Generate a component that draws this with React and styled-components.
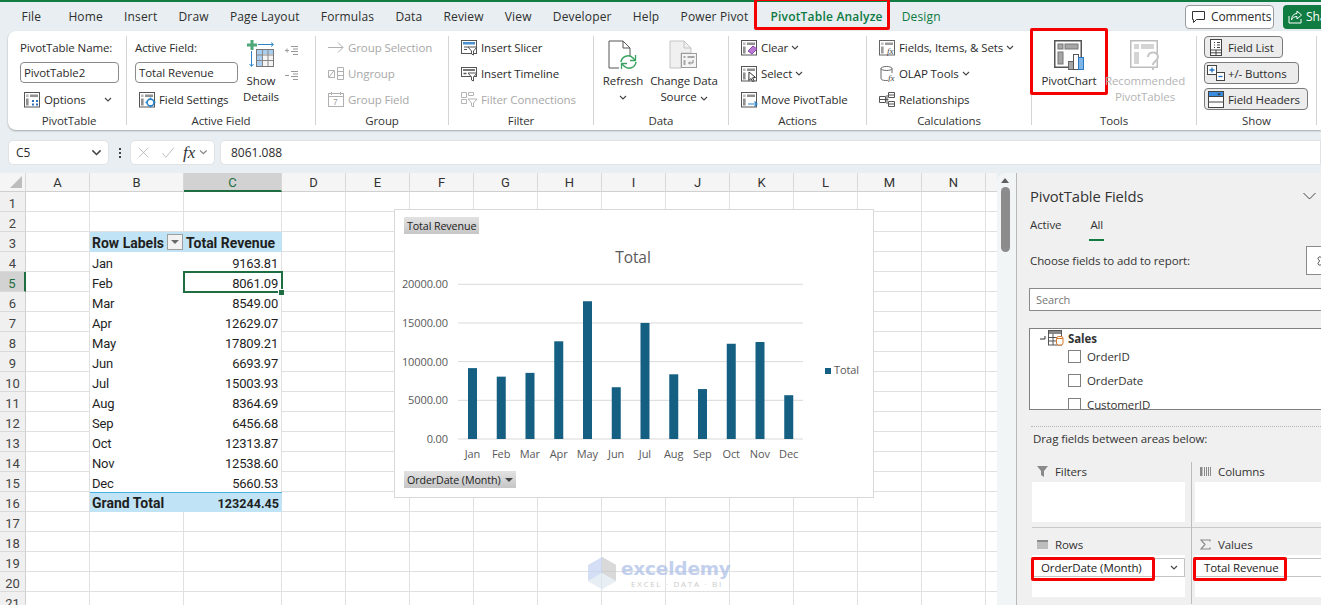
import React from 'react';
import styled, { createGlobalStyle } from 'styled-components';
import { Settings } from 'lucide-react';

const GlobalStyle = createGlobalStyle`
  html, body {
    margin: 0;
    height: 100%;
    overflow: hidden;
    background: #e8eef1;
  }
  *, *::before, *::after { box-sizing: border-box; }
`;

const UI_FONT = `"Open Sans", "Noto Sans", sans-serif`;
const CELL_FONT = `Roboto, "Liberation Sans", sans-serif`;
const RED = '#f50000';
const GREEN = '#107c41';

const Page = styled.div`
  display: flex;
  flex-direction: column;
  height: 605px;
  width: 1321px;
  overflow: hidden;
  font-family: ${UI_FONT};
  font-size: 11.5px;
  letter-spacing: -0.1px;
  color: #2b2b2b;
`;

/* tabs */
const TabBar = styled.div`
  display: flex;
  align-items: center;
  height: 31px;
  flex: none;
  padding-left: 11px;
  border-top: 2px solid ${GREEN};
`;

const Tab = styled.div`
  position: relative;
  padding: 0 10.6px;
  font-size: 12px;
  letter-spacing: 0.15px;
  white-space: nowrap;
  color: ${p => (p.$green ? '#0e7a43' : '#2f2f2f')};
  ${p => p.$first && 'margin-right: 6px;'}
  ${p => p.$active && `
    margin: 0 1.4px 0 -4.6px;
    padding: 0 7px 0 16px;
    font-weight: 600;
    letter-spacing: 0.2px;
    &::before {
      content: '';
      position: absolute;
      left: 8px; right: 7px; bottom: -4px;
      height: 2px;
      background: ${GREEN};
    }
    &::after {
      content: '';
      position: absolute;
      left: 0; right: 0; top: -10px; bottom: -5px;
      border: 3px solid ${RED};
      border-radius: 2px;
    }
  `}
`;

const TabActions = styled.div`
  display: flex;
  align-items: center;
  gap: 9px;
  margin-left: auto;
  margin-right: -22px;
`;

const CommentsButton = styled.div`
  display: flex;
  align-items: center;
  gap: 5px;
  width: 89px;
  height: 24px;
  padding-left: 5px;
  background: #fff;
  border: 1px solid #9a9a9a;
  border-radius: 4px;
  font-size: 12px;
`;

const ShareButton = styled.div`
  display: flex;
  align-items: center;
  gap: 3px;
  width: 60px;
  height: 24px;
  padding-left: 5px;
  background: ${GREEN};
  border-radius: 4px;
  color: #fff;
  font-size: 12px;
`;

/* ribbon */
const Ribbon = styled.div`
  display: flex;
  flex: none;
  height: 99px;
  margin-left: 8px;
  padding: 5px 0;
  background: #fff;
  border-radius: 8px 0 0 8px;
  box-shadow: 0 1px 2px rgba(0, 0, 0, 0.3);
`;

const Group = styled.section`
  display: flex;
  flex-direction: column;
  flex: none;
  width: ${p => p.$w}px;
  border-right: 1px solid #d4d4d4;
`;

const GroupBody = styled.div`
  display: flex;
  flex: 1;
  gap: ${p => p.$gap || 0}px;
  margin-top: -2px;
  padding-left: ${p => (p.$pad === undefined ? 12 : p.$pad)}px;
`;

const GroupLabel = styled.div`
  height: 14px;
  margin-bottom: -3px;
  padding-left: ${p => p.$indent || 0}px;
  line-height: 14px;
  text-align: center;
  color: #333;
`;

const Stack = styled.div`
  display: flex;
  flex-direction: column;
  width: ${p => (p.$w ? `${p.$w}px` : 'auto')};
`;

const SmallRow = styled.div`
  display: flex;
  align-items: center;
  gap: 3px;
  height: 26px;
  padding-left: ${p => (p.$inset ? 4 : 0)}px;
  white-space: nowrap;
  color: ${p => (p.$dim ? '#a8a8a8' : 'inherit')};
`;

const PlainLine = styled.div`
  display: flex;
  align-items: center;
  height: 26px;
  white-space: nowrap;
`;

const NameInput = styled.div`
  display: flex;
  align-items: center;
  height: 21px;
  margin: 2px 0 3px;
  padding-left: 3px;
  background: #fff;
  border: 1px solid #8a8a8a;
  border-radius: 4px;
`;

const TallButton = styled.div`
  display: flex;
  flex-direction: column;
  align-items: center;
  width: ${p => p.$w}px;
  padding-top: 6px;
  text-align: center;
  line-height: 16px;
  white-space: nowrap;
  color: ${p => (p.$dim ? '#b4b4b4' : 'inherit')};
  position: relative;
  ${p => p.$marked && `
    &::after {
      content: '';
      position: absolute;
      left: -2px; right: -2px; top: -6px; height: 67px;
      border: 3px solid ${RED};
      border-radius: 2px;
    }
  `}
`;

const TallIcon = styled.div`
  height: 30px;
  margin-bottom: 3px;
`;

const SideIcons = styled.div`
  display: flex;
  flex-direction: column;
  gap: 14px;
  padding-top: 11px;
`;

const ToggleStack = styled.div`
  display: flex;
  flex-direction: column;
  align-items: flex-start;
  gap: 4px;
  padding-top: 2px;
`;

const ToggleButton = styled.div`
  display: flex;
  align-items: center;
  width: ${p => p.$w}px;
  height: 22px;
  background: #ececec;
  border: 1px solid #7b7b7b;
  border-radius: 4px;
  white-space: nowrap;
`;

const ToggleIcon = styled.span`
  display: flex;
  justify-content: center;
  flex: none;
  width: 22px;
  margin-right: 1px;
`;

const Caret = ({ color = '#444', size = 8, style }) => (
  <svg width={size} height={size * 0.625} viewBox="0 0 8 5" fill="none" style={style}>
    <path d="M1 1l3 3 3-3" stroke={color} strokeWidth="1.1" />
  </svg>
);

/* ribbon icons */
const SmallIcon = ({ children, w = 17 }) => (
  <svg width={w} height="17" viewBox={`0 0 ${w} 17`} fill="none" style={{ flex: 'none' }}>
    {children}
  </svg>
);

const PivotBase = ({ c = '#555', children }) => (
  <SmallIcon>
    <rect x=".5" y="1.5" width="15" height="14.5" stroke={c} fill="#fff" />
    <rect x="6" y="3.5" width="8" height="2.5" fill={c} opacity=".65" />
    <rect x="2" y="3.5" width="2.6" height="2.5" fill={c} opacity=".4" />
    <rect x="2" y="7.5" width="2.6" height="7" fill={c} opacity=".65" />
    {children}
  </SmallIcon>
);

const OptionsIcon = () => (
  <PivotBase>
    <path d="M8 9h2v2H8zM12 9h2v2h-2zM8 12.5h2v2H8zM12 12.5h2v2h-2z" fill="#2f6fb5" />
  </PivotBase>
);
const SettingsIcon = () => (
  <PivotBase>
    <circle cx="11.5" cy="11.5" r="3.4" fill="#fff" stroke="#2e86c9" strokeWidth="1.6" />
    <path d="M11.5 6.5v2M11.5 14.5v2M6.5 11.5h2M14.5 11.5h2" stroke="#2e86c9" strokeWidth="1.4" />
  </PivotBase>
);
const ClearIcon = () => (
  <PivotBase>
    <path d="M7 12l5-5 4 3-5 5z" fill="#b77ad0" stroke="#8e44ad" />
  </PivotBase>
);
const SelectIcon = () => (
  <PivotBase>
    <path d="M8 7l6.5 5.5-3 .3 1.6 3-1.5.7-1.5-3-2.3 2z" fill="#fff" stroke="#333" />
  </PivotBase>
);
const MoveIcon = () => (
  <PivotBase>
    <path d="M7 13h9M13.5 10.5L16 13l-2.5 2.5" stroke="#2e86c9" strokeWidth="1.2" />
  </PivotBase>
);
const FieldsIcon = () => (
  <PivotBase c="#666">
    <text x="8" y="15" fontFamily="Liberation Serif, serif" fontStyle="italic" fontSize="9" fill="#444">fx</text>
  </PivotBase>
);
const OlapIcon = () => (
  <SmallIcon>
    <path d="M2 3.5v10c0 1 1.8 2 4.5 2s2.5-.4 2.5-.4M13 3.5V8" stroke="#666" />
    <ellipse cx="7.5" cy="3.5" rx="5.5" ry="2" stroke="#666" />
    <text x="9" y="16" fontFamily="Liberation Serif, serif" fontStyle="italic" fontSize="9" fill="#444">fx</text>
  </SmallIcon>
);
const RelationIcon = () => (
  <SmallIcon>
    <path d="M.5 5.5h6v6h-6zM9.5 1.5h6v5h-6zM9.5 10.5h6v5h-6zM.5 8.5h6M9.5 4h6M9.5 13h6M6.5 8.5h3M8 4v9" stroke="#555" />
  </SmallIcon>
);
const SlicerIcon = ({ c = '#555' }) => (
  <SmallIcon>
    <rect x=".5" y="1.5" width="15" height="13" stroke={c} />
    <rect x="2" y="3" width="12" height="2.5" fill="#4a90d0" />
    <path d="M3 8h4M3 10.5h3" stroke={c} />
    <path d="M7 8h9l-3.5 4v4l-2-1v-3z" fill="#fff" stroke={c} />
  </SmallIcon>
);
const TimelineIcon = () => (
  <SmallIcon>
    <rect x=".5" y="2.5" width="15" height="9" stroke="#555" />
    <rect x="2" y="4" width="12" height="2" fill="#777" />
    <path d="M2.5 8.5h3" stroke="#555" strokeWidth="1.5" />
    <path d="M7 8h9l-3.5 4v4l-2-1v-3z" fill="#fff" stroke="#555" />
  </SmallIcon>
);
const ConnectionsIcon = () => (
  <SmallIcon>
    <path d="M.5 1.5h5v5h-5zM.5 8.5h5v4h-5zM7.5 1.5h5v3h-5z" stroke="#b5b5b5" />
    <path d="M7 8h9l-3.5 4v4l-2-1v-3z" fill="#fff" stroke="#b5b5b5" />
  </SmallIcon>
);
const ArrowIcon = () => (
  <SmallIcon>
    <path d="M0 8.5h15M10 3.5l5 5-5 5" stroke="#b0b0b0" />
  </SmallIcon>
);
const UngroupIcon = () => (
  <SmallIcon>
    <path d="M.5 5.5h6v7h-6zM9.5 2.5h6v12h-6zM9.5 6.5h6M9.5 10.5h6M1 12l5-6.5" stroke="#b0b0b0" />
  </SmallIcon>
);
const GroupFieldIcon = () => (
  <SmallIcon>
    <rect x=".5" y="2.5" width="15" height="13" stroke="#b0b0b0" />
    <path d="M.5 5.5h15M3.5 1v3M12.5 1v3" stroke="#b0b0b0" />
    <text x="5" y="14" fontFamily="Liberation Sans, sans-serif" fontSize="8.5" fill="#a0a0a0">7</text>
  </SmallIcon>
);
const ExpandIcon = ({ minus }) => (
  <svg width="15" height="11" viewBox="0 0 15 11" fill="none">
    <path d={minus ? 'M1 5.5h4' : 'M1 5.5h4M3 3.5v4'} stroke="#999" />
    <path d="M7 1.5h7M9 4h5M7 6.5h7M9 9.5h5" stroke="#999" />
  </svg>
);
const ShowDetailsIcon = () => (
  <svg width="28" height="28" viewBox="0 0 28 28" fill="none">
    <path d="M3.5 0h3v3.5H10v3H6.5V10h-3V6.5H0v-3h3.5z" fill="#4ea879" />
    <path d="M11 4.5h15M24 2.5l2.5 2-2.5 2M4.5 11v15M2.5 24l2 2.5 2-2.5" stroke="#2e86c9" />
    <rect x="9.5" y="9.5" width="17" height="17" fill="#f4f4f4" stroke="#777" />
    <rect x="10" y="10" width="5" height="16" fill="#a9cdee" />
    <rect x="10" y="10" width="16" height="4" fill="#a9cdee" />
    <path d="M15.5 10v16M21 10v16M10 15h16M10 20.5h16" stroke="#888" />
  </svg>
);
const RefreshIcon = () => (
  <svg width="30" height="30" viewBox="0 0 30 30" fill="none">
    <path d="M1 1h14l7 7v8M15 1v7h7M1 1v27h10" stroke="#555" />
    <path d="M13 22a7 7 0 0 1 12-4l2 2M28 22a7 7 0 0 1-12 4l-2-2" stroke="#3aa35f" strokeWidth="1.5" />
    <path d="M27.5 15v5.5H22M13.5 29v-5.5H19" stroke="#3aa35f" strokeWidth="1.3" />
  </svg>
);
const ChangeSourceIcon = () => (
  <svg width="30" height="30" viewBox="0 0 30 30" fill="none">
    <path d="M1 1h14l7 7v5H12v15H1z" fill="#f0f0f0" stroke="#c4c4c4" />
    <path d="M15 1v7h7" stroke="#c4c4c4" />
    <rect x="12.5" y="13.5" width="15" height="14" fill="#f4f4f4" stroke="#9c9c9c" />
    <path d="M14.5 16h2v2h-2zM18.5 16h7v2h-7zM14.5 20h2v5h-2z" fill="#a8a8a8" />
    <path d="M24 20v3h-4M21 21.5L19.5 23l1.5 1.5" stroke="#888" />
  </svg>
);
const PivotChartIcon = () => (
  <svg width="31" height="31" viewBox="0 0 31 31" fill="none">
    <rect x=".75" y=".75" width="26.5" height="26.5" fill="#fff" stroke="#555" strokeWidth="1.5" />
    <rect x="4" y="4" width="5" height="5" fill="#a6a6a6" stroke="#777" />
    <rect x="11" y="4" width="13" height="5" fill="#a6a6a6" stroke="#777" />
    <rect x="4" y="12" width="5" height="12" fill="#a6a6a6" stroke="#777" />
    <rect x="14.5" y="21.5" width="5" height="8" fill="#a6a6a6" stroke="#666" />
    <rect x="19.5" y="14.5" width="5" height="15" fill="#fff" stroke="#555" />
    <rect x="24.5" y="17.5" width="5" height="12" fill="#7fb5e6" stroke="#2b79c2" />
  </svg>
);
const RecommendedIcon = () => (
  <svg width="31" height="31" viewBox="0 0 31 31" fill="none">
    <rect x=".75" y=".75" width="26.5" height="26.5" fill="#fff" stroke="#bdbdbd" strokeWidth="1.5" />
    <rect x="4" y="4" width="5" height="5" fill="#d4d4d4" />
    <rect x="11" y="4" width="13" height="5" fill="#d4d4d4" />
    <rect x="4" y="12" width="5" height="12" fill="#d4d4d4" />
    <path d="M18 17c0-6 10-6 10 0 0 4-5 4-5 8M23 27v3" stroke="#c4c4c4" strokeWidth="2" fill="#fff" />
  </svg>
);
const FieldListIcon = () => (
  <svg width="12" height="17" viewBox="0 0 12 17" fill="none">
    <rect x=".5" y=".5" width="11" height="16" stroke="#444" fill="#fff" />
    <path d="M4 3.500h1M7 3.500h3M4 6h1M7 6h3M4 8.500h1M7 8.500h3M.5 11h11M.5 13.800h11M6 11v5.500" stroke="#444" />
  </svg>
);
const PlusMinusIcon = () => (
  <svg width="18" height="17" viewBox="0 0 18 17" fill="none">
    <rect x=".5" y=".5" width="9" height="9" stroke="#444" fill="#fff" />
    <path d="M2.500 5h5M5 2.500v5" stroke="#1f6fc0" strokeWidth="1.3" />
    <rect x="9.500" y="7.500" width="8" height="8" stroke="#444" fill="#fff" />
    <path d="M11.500 11.500h4" stroke="#1f6fc0" strokeWidth="1.3" />
  </svg>
);
const FieldHeadersIcon = () => (
  <svg width="16" height="17" viewBox="0 0 16 17" fill="none">
    <rect x=".5" y=".5" width="15" height="16" stroke="#444" fill="#fff" />
    <rect x="1" y="1" width="14" height="4" fill="#3a8dde" />
    <path d="M.5 5.500h15M.5 11h15" stroke="#444" />
    <path d="M9 2.500h4L11 4.500z" fill="#333" />
  </svg>
);

/* formula bar */
const FormulaBar = styled.div`
  display: flex;
  align-items: center;
  flex: none;
  height: 43px;
  padding: 10px 0 8px 8px;
`;

const FormulaBox = styled.div`
  display: flex;
  align-items: center;
  flex: ${p => (p.$w ? 'none' : 1)};
  width: ${p => (p.$w ? `${p.$w}px` : 'auto')};
  height: 25px;
  margin-left: ${p => p.$gapLeft || 0}px;
  padding: 0 6px 0 ${p => p.$pad || 7}px;
  gap: ${p => p.$gap || 0}px;
  background: #fff;
  border: 1px solid #dfe3e5;
  border-radius: ${p => (p.$w ? '5px' : '5px 0 0 5px')};
  font-size: 12px;
  letter-spacing: 0;
  justify-content: ${p => (p.$spread ? 'space-between' : 'flex-start')};
`;

const GripDots = styled.div`
  display: flex;
  flex-direction: column;
  gap: 2px;
  width: 21px;
  align-items: center;
  & > i {
    display: block;
    width: 2px;
    height: 2px;
    background: #444;
  }
`;

const FormulaIcons = () => (
  <svg width="48" height="16" viewBox="0 0 48 16" fill="none">
    <path d="M2 2l11 11M13 2L2 13" stroke="#b5b5b5" />
    <path d="M29 8l4 5 9-11" stroke="#b5b5b5" />
  </svg>
);

const FxMark = styled.span`
  font-family: 'Liberation Serif', serif;
  font-style: italic;
  font-size: 17px;
  color: #333;
`;

/* sheet */
const Workspace = styled.div`
  display: flex;
  flex: 1;
  min-height: 0;
`;

const Sheet = styled.div`
  position: relative;
  width: 997px;
  flex: none;
  overflow: hidden;
  background: #fff;
`;

const SheetGrid = styled.div`
  display: grid;
  grid-template-columns: 26px 64px 94px 98px repeat(12, 64px);
  grid-template-rows: 19px;
  grid-auto-rows: 20px;
  width: 1050px;
  font-family: ${CELL_FONT};
  font-size: 13px;
  letter-spacing: 0;
  color: #1f1f1f;
`;

const ColHead = styled.div`
  display: flex;
  align-items: center;
  justify-content: center;
  padding-top: 1px;
  background: ${p => (p.$on ? '#d2d2d2' : '#f5f5f5')};
  border-right: 1px solid #d8d8d8;
  border-bottom: ${p => (p.$on ? '2px solid #1e6e42' : '1px solid #d0d0d0')};
  color: ${p => (p.$on ? '#1e6e42' : '#333')};
`;

const Corner = styled(ColHead)`
  position: relative;
  &::after {
    content: '';
    position: absolute;
    right: 3px;
    bottom: 3px;
    width: 12px;
    height: 12px;
    border-style: solid;
    border-width: 0 0 12px 12px;
    border-color: transparent transparent #bdbdbd transparent;
  }
`;

const RowHead = styled.div`
  display: flex;
  align-items: center;
  justify-content: center;
  padding-top: 3px;
  background: ${p => (p.$on ? '#d2d2d2' : '#f0f0f0')};
  border-right: ${p => (p.$on ? '2px solid #1e6e42' : '1px solid #d0d0d0')};
  border-bottom: 1px solid #dadada;
  color: ${p => (p.$on ? '#1e6e42' : '#444')};
`;

const Cell = styled.div`
  border-right: 1px solid #e0e0e0;
  border-bottom: 1px solid #e0e0e0;
`;

const PivotCell = styled.div`
  position: relative;
  display: flex;
  align-items: center;
  justify-content: ${p => (p.$start || !p.$right ? 'space-between' : 'flex-end')};
  padding: ${p => (p.$total ? 1 : 2)}px 3px 0 2px;
  white-space: nowrap;
  letter-spacing: ${p => (p.$bold ? '0' : '-0.2px')};
  font-size: ${p => (p.$bold ? (p.$figure ? 12.6 : 14) : 13)}px;
  font-weight: ${p => (p.$bold ? 700 : 400)};
  background: ${p => (p.$band ? '#c0e4f5' : '#fff')};
  border-top: ${p => (p.$total ? '1px solid #44b3e1' : 'none')};
  ${p => p.$right && !p.$band && 'border-right: 1px solid #e0e0e0;'}
  ${p => p.$on && `
    outline: 2px solid #1e6e42;
    outline-offset: -1px;
    z-index: 1;
    &::after {
      content: '';
      position: absolute;
      right: -3px;
      bottom: -3px;
      width: 6px;
      height: 6px;
      background: #1e6e42;
      border: 1px solid #fff;
      border-width: 1px 0 0 1px;
    }
  `}
`;

const FilterButton = styled.div`
  display: flex;
  align-items: center;
  justify-content: center;
  width: 16px;
  height: 16px;
  margin: -2px -2px 0 0;
  background: #f2f2f2;
  border: 1px solid #9e9e9e;
  &::after {
    content: '';
    width: 8px;
    height: 4px;
    border-style: solid;
    border-width: 4px 4px 0 4px;
    border-color: #6a6a6a transparent transparent transparent;
  }
`;

/* chart */
const ChartCard = styled.div`
  position: absolute;
  left: 394px;
  top: 36px;
  display: flex;
  flex-direction: column;
  width: 480px;
  height: 289px;
  padding-top: 7px;
  background: #fff;
  border: 1px solid #d9d9d9;
`;

const ChartField = styled.div`
  display: flex;
  align-items: center;
  gap: 5px;
  align-self: flex-start;
  height: 17px;
  margin-left: 9px;
  padding: 0 3px;
  background: linear-gradient(#e2e2e2, #c6c6c6);
  font-size: 10.7px;
  white-space: nowrap;
  color: #222;
`;

const DownTriangle = styled.span`
  border-style: solid;
  border-width: 4px 4px 0 4px;
  border-color: #444 transparent transparent transparent;
`;

const revenue = [
  ['Jan', 9163.81], ['Feb', 8061.09], ['Mar', 8549.0], ['Apr', 12629.07],
  ['May', 17809.21], ['Jun', 6693.97], ['Jul', 15003.93], ['Aug', 8364.69],
  ['Sep', 6456.68], ['Oct', 12313.87], ['Nov', 12538.6], ['Dec', 5660.53],
];

const ChartPlot = () => {
  // svg origin is the page point (395, 234)
  const base = 205;
  const scale = 154.7 / 20000;
  const left = 63;
  const step = 345 / 12;
  return (
    <svg width="478" height="237" viewBox="0 0 478 237" style={{ display: 'block', flex: 'none' }} fontFamily={UI_FONT}>
      <text x="238" y="29" textAnchor="middle" fontSize="15.500" fill="#595959">Total</text>
      {[0, 5000, 10000, 15000, 20000].map(v => {
        const y = base - v * scale;
        return (
          <g key={v}>
            <line x1={left} x2={left + 345} y1={y} y2={y} stroke="#d9d9d9" />
            <text x="53" y={y + 4} textAnchor="end" fontSize="11" fill="#595959">{v.toFixed(2)}</text>
          </g>
        );
      })}
      {revenue.map(([m, v], i) => (
        <g key={m}>
          <rect x={left + step * i + 10} y={base - v * scale} width="9" height={v * scale} fill="#156082" />
          <text x={left + step * i + 14.400} y="224" textAnchor="middle" fontSize="11" fill="#595959">{m}</text>
        </g>
      ))}
      <rect x="430" y="134" width="6" height="6" fill="#156082" />
      <text x="439" y="140" fontSize="11" fill="#595959">Total</text>
    </svg>
  );
};

/* watermark */
const Watermark = styled.div`
  position: absolute;
  left: 588px;
  top: 384px;
  display: flex;
  align-items: center;
  gap: 5px;
  opacity: 0.7;
`;

const WatermarkText = styled.div`
  display: flex;
  flex-direction: column;
`;

const WatermarkName = styled.div`
  font-family: 'DejaVu Sans', sans-serif;
  font-weight: 700;
  font-size: 18.500px;
  line-height: 21px;
  letter-spacing: -0.2px;
  color: #a9bde8;
`;

const WatermarkTag = styled.div`
  font-family: ${UI_FONT};
  font-size: 8px;
  line-height: 10px;
  letter-spacing: 1.700px;
  padding-left: 10px;
  color: #b5b5b5;
`;

/* side panel */
const ScrollRail = styled.div`
  position: relative;
  display: flex;
  flex-direction: column;
  align-items: center;
  flex: none;
  width: 20px;
  padding-top: 5px;
  gap: 4px;
  padding-right: 3px;
  background: #f2f5f6;
  border-radius: 8px 0 0 0;
  border-right: 1px solid #b8b8b8;
`;

const ScrollUp = styled.div`
  border-style: solid;
  border-width: 0 4px 5px 4px;
  border-color: transparent transparent #5f5f5f transparent;
`;

const ScrollThumb = styled.div`
  width: 9px;
  height: 65px;
  border-radius: 5px;
  background: #8c8c8c;
`;

const Panel = styled.aside`
  flex: 1;
  min-width: 0;
  overflow: hidden;
  padding-left: 13px;
  background: #f0f0f0;
  color: #333;
  font-size: 11.500px;
`;

const PanelHeader = styled.div`
  display: flex;
  align-items: center;
  justify-content: space-between;
  height: 20px;
  margin-top: 13px;
  padding-right: 5px;
  font-size: 14.800px;
`;

const PanelTabs = styled.div`
  display: flex;
  gap: 27px;
  height: 25px;
  margin-top: 10px;
  line-height: 18px;
`;

const PanelTab = styled.div`
  height: 25px;
  margin-left: ${p => (p.$first ? '-1px' : 0)};
  padding: 0 1px;
  border-bottom: ${p => (p.$on ? `2px solid ${GREEN}` : 'none')};
`;

const ChooseRow = styled.div`
  display: flex;
  align-items: center;
  justify-content: space-between;
  width: 310px;
  height: 29px;
  margin-top: 5px;
`;

const GearButton = styled.div`
  display: flex;
  align-items: center;
  width: 34px;
  height: 29px;
  padding-left: 9px;
  background: #fff;
  border: 1px solid #8a8a8a;
`;

const SearchBox = styled.div`
  display: flex;
  align-items: center;
  width: 330px;
  height: 23px;
  margin: 13px 0 0 -1px;
  padding: 0 0 1px 6px;
  background: #fff;
  border: 1px solid #8a8a8a;
  color: #777;
  font-size: 11px;
`;

const FieldList = styled.div`
  width: 330px;
  height: 82px;
  margin: 17px 0 0 -1px;
  overflow: hidden;
  background: #fff;
  border: 1px solid #808080;
`;

const TreeRoot = styled.div`
  display: flex;
  align-items: center;
  gap: 4px;
  height: 18px;
  margin-bottom: -3px;
  padding-left: 9px;
  font-weight: 700;
`;

const TreeItem = styled.div`
  display: flex;
  align-items: center;
  gap: 6px;
  height: 24px;
  padding-left: 38px;
`;

const CheckBox = styled.span`
  flex: none;
  width: 13px;
  height: 13px;
  background: #fff;
  border: 1px solid #808080;
`;

const DottedRule = styled.div`
  width: 330px;
  margin: 16px 0 0 1px;
  border-top: 1px dotted #b5b5b5;
`;

const DragHint = styled.div`
  height: 16px;
  margin: 4px 0 0 3px;
  line-height: 16px;
`;

const Areas = styled.div`
  display: grid;
  grid-template-columns: 160px 170px;
  grid-template-rows: 66px 76px;
  margin: 15px 0 0 2px;
`;

const Area = styled.div`
  display: flex;
  flex-direction: column;
  padding: ${p => (p.$lower ? '7px' : '0')} ${p => (p.$right ? 0 : '6px')} 0 ${p => (p.$right ? '3px' : '0')};
  border-right: ${p => (p.$right ? 'none' : '1px solid #bdbdbd')};
  border-bottom: ${p => (p.$lower ? 'none' : '1px solid #c8c8c8')};
`;

const AreaTitle = styled.div`
  display: flex;
  align-items: center;
  gap: 7px;
  height: 20px;
  padding: 0 0 2px 5px;
  flex: none;
`;

const AreaBody = styled.div`
  height: ${p => p.$h}px;
  padding-top: ${p => (p.$h > 40 ? 3 : 0)}px;
  background: #fff;
`;

const AreaChip = styled.div`
  position: relative;
  display: flex;
  align-items: center;
  justify-content: space-between;
  height: 19px;
  margin-left: 1px;
  padding: 0 6px 0 7px;
  background: #fff;
  border: 1px solid #c4c4c4;
  ${p => p.$bare && 'border-right: none; margin-left: 0; padding-left: 8px;'}
  white-space: nowrap;
  color: #222;
`;

const ChipMark = styled.span`
  position: absolute;
  left: -3px;
  top: -2px;
  width: ${p => p.$w}px;
  height: 24px;
  border: 3px solid ${RED};
  border-radius: 2px;
`;

const FilterGlyph = () => (
  <svg width="11" height="11" viewBox="0 0 11 11"><path d="M0 0h11L7 5v6L4 9V5z" fill="#8a8a8a" /></svg>
);
const ColumnsGlyph = () => (
  <svg width="11" height="11" viewBox="0 0 11 11"><path d="M0 1h2.500v9H0zM4 1h1v9H4zM6 1h1v9H6zM8 1h1v9H8zM10 1h1v9h-1z" fill="#8a8a8a" /></svg>
);
const RowsGlyph = () => (
  <svg width="11" height="11" viewBox="0 0 11 11"><path d="M0 1h11v2.500H0zM0 4.500h11v1H0zM0 6.500h11v1H0zM0 8.500h11v1H0z" fill="#8a8a8a" /></svg>
);
const SigmaGlyph = () => (
  <svg width="11" height="11" viewBox="0 0 11 11" fill="none"><path d="M10 2.500V1H1l4 4.500L1 10h9V8.500" stroke="#8a8a8a" strokeWidth="1.200" /></svg>
);

const SalesTableIcon = () => (
  <svg width="25" height="16" viewBox="0 0 25 16" fill="none">
    <path d="M1 9h5V6" stroke="#333" />
    <rect x="9.500" y=".5" width="13" height="14.500" stroke="#555" fill="#fff" />
    <rect x="10" y="1" width="12" height="3" fill="#888" />
    <path d="M9.500 7.500h13M9.500 11h13M14 4v11" stroke="#555" />
    <rect x="17.500" y="6.500" width="6.500" height="8.500" rx="2" fill="#fff" stroke="#d9792b" />
    <path d="M17.500 8.500h6.500" stroke="#d9792b" />
  </svg>
);

const columnLetters = 'ABCDEFGHIJKLMN'.split('');
const rowCount = 21;

const pivotRows = {
  3: { label: 'Row Labels', value: 'Total Revenue', band: true, bold: true, filter: true },
  ...Object.fromEntries(
    [
      ['Jan', '9163.81'], ['Feb', '8061.09'], ['Mar', '8549.00'], ['Apr', '12629.07'],
      ['May', '17809.21'], ['Jun', '6693.97'], ['Jul', '15003.93'], ['Aug', '8364.69'],
      ['Sep', '6456.68'], ['Oct', '12313.87'], ['Nov', '12538.60'], ['Dec', '5660.53'],
    ].map(([label, value], i) => [i + 4, { label, value }]),
  ),
  16: { label: 'Grand Total', value: '123244.45', band: true, bold: true, total: true },
};

const SheetRow = ({ n }) => {
  const pivot = pivotRows[n];
  return (
    <>
      <RowHead $on={n === 5}>{n}</RowHead>
      <Cell />
      {pivot ? (
        <>
          <PivotCell $band={pivot.band} $bold={pivot.bold} $total={pivot.total}>
            {pivot.label}
            {pivot.filter && <FilterButton />}
          </PivotCell>
          <PivotCell
            $right
            $start={pivot.filter}
            $figure={pivot.total}
            $band={pivot.band}
            $bold={pivot.bold}
            $total={pivot.total}
            $on={n === 5}
          >
            {pivot.value}
          </PivotCell>
        </>
      ) : (
        <>
          <Cell />
          <Cell />
        </>
      )}
      {Array.from({ length: 12 }, (_, i) => <Cell key={i} />)}
    </>
  );
};

const tabs = ['Home', 'Insert', 'Draw', 'Page Layout', 'Formulas', 'Data', 'Review', 'View', 'Developer', 'Help', 'Power Pivot'];

const App = () => (
  <Page>
    <GlobalStyle />
    <TabBar>
      <Tab $first>File</Tab>
      {tabs.map(t => <Tab key={t}>{t}</Tab>)}
      <Tab $green $active>PivotTable Analyze</Tab>
      <Tab $green>Design</Tab>
      <TabActions>
        <CommentsButton>
          <svg width="15" height="14" viewBox="0 0 15 14" fill="none"><path d="M1.500 1.500h12v8h-8l-3 3v-3h-1z" stroke="#333" /></svg>
          Comments
        </CommentsButton>
        <ShareButton>
          <svg width="15" height="14" viewBox="0 0 15 14" fill="none"><path d="M1 6v7h12V9M9 1l4.500 4L9 9V6.500C6 6.500 4 8 3.500 10 3.500 6 6 3.500 9 3.500z" stroke="#fff" /></svg>
          Share
        </ShareButton>
      </TabActions>
    </TabBar>

    <Ribbon>
      <Group $w={119}>
        <GroupBody>
          <Stack $w={99}>
            <PlainLine>PivotTable Name:</PlainLine>
            <NameInput>PivotTable2</NameInput>
            <SmallRow $inset>
              <OptionsIcon />Options<Caret style={{ marginLeft: 15 }} />
            </SmallRow>
          </Stack>
        </GroupBody>
        <GroupLabel $indent={4}>PivotTable</GroupLabel>
      </Group>

      <Group $w={189}>
        <GroupBody $pad={8} $gap={9}>
          <Stack $w={103}>
            <PlainLine>Active Field:</PlainLine>
            <NameInput>Total Revenue</NameInput>
            <SmallRow $inset><SettingsIcon />Field Settings</SmallRow>
          </Stack>
          <TallButton $w={28}>
            <TallIcon><ShowDetailsIcon /></TallIcon>
            Show<br />Details
          </TallButton>
          <SideIcons>
            <ExpandIcon />
            <ExpandIcon minus />
          </SideIcons>
        </GroupBody>
        <GroupLabel>Active Field</GroupLabel>
      </Group>

      <Group $w={133}>
        <GroupBody>
          <Stack>
            <SmallRow $dim><ArrowIcon />Group Selection</SmallRow>
            <SmallRow $dim><UngroupIcon />Ungroup</SmallRow>
            <SmallRow $dim><GroupFieldIcon />Group Field</SmallRow>
          </Stack>
        </GroupBody>
        <GroupLabel>Group</GroupLabel>
      </Group>

      <Group $w={145}>
        <GroupBody>
          <Stack>
            <SmallRow><SlicerIcon />Insert Slicer</SmallRow>
            <SmallRow><TimelineIcon />Insert Timeline</SmallRow>
            <SmallRow $dim><ConnectionsIcon />Filter Connections</SmallRow>
          </Stack>
        </GroupBody>
        <GroupLabel>Filter</GroupLabel>
      </Group>

      <Group $w={135}>
        <GroupBody $pad={7} $gap={3}>
          <TallButton $w={44}>
            <TallIcon><RefreshIcon /></TallIcon>
            Refresh
            <Caret style={{ marginTop: 6 }} />
          </TallButton>
          <TallButton $w={72}>
            <TallIcon><ChangeSourceIcon /></TallIcon>
            Change Data
            <span>Source <Caret /></span>
          </TallButton>
        </GroupBody>
        <GroupLabel>Data</GroupLabel>
      </Group>

      <Group $w={138}>
        <GroupBody>
          <Stack>
            <SmallRow><ClearIcon />Clear <Caret /></SmallRow>
            <SmallRow><SelectIcon />Select <Caret /></SmallRow>
            <SmallRow><MoveIcon />Move PivotTable</SmallRow>
          </Stack>
        </GroupBody>
        <GroupLabel>Actions</GroupLabel>
      </Group>

      <Group $w={165}>
        <GroupBody>
          <Stack>
            <SmallRow><FieldsIcon />Fields, Items, &amp; Sets <Caret /></SmallRow>
            <SmallRow><OlapIcon />OLAP Tools <Caret /></SmallRow>
            <SmallRow><RelationIcon />Relationships</SmallRow>
          </Stack>
        </GroupBody>
        <GroupLabel>Calculations</GroupLabel>
      </Group>

      <Group $w={165}>
        <GroupBody $pad={0}>
          <TallButton $w={74} $marked><TallIcon><PivotChartIcon /></TallIcon>PivotChart</TallButton>
          <TallButton $w={78} $dim>
            <TallIcon><RecommendedIcon /></TallIcon>
            Recommended<br />PivotTables
          </TallButton>
        </GroupBody>
        <GroupLabel>Tools</GroupLabel>
      </Group>

      <Group $w={120}>
        <GroupBody $pad={7}>
          <ToggleStack>
            <ToggleButton $w={79}><ToggleIcon><FieldListIcon /></ToggleIcon>Field List</ToggleButton>
            <ToggleButton $w={95}><ToggleIcon><PlusMinusIcon /></ToggleIcon>+/- Buttons</ToggleButton>
            <ToggleButton $w={104}><ToggleIcon><FieldHeadersIcon /></ToggleIcon>Field Headers</ToggleButton>
          </ToggleStack>
        </GroupBody>
        <GroupLabel>Show</GroupLabel>
      </Group>
    </Ribbon>

    <FormulaBar>
      <FormulaBox $w={101} $spread>C5<Caret size={11} /></FormulaBox>
      <GripDots><i /><i /><i /></GripDots>
      <FormulaBox $w={85} $pad={6} $gap={4}>
        <FormulaIcons /><FxMark>fx</FxMark><Caret color="#888" size={10} />
      </FormulaBox>
      <FormulaBox $gapLeft={5} $pad={10}>8061.088</FormulaBox>
    </FormulaBar>

    <Workspace>
      <Sheet>
        <SheetGrid>
          <Corner />
          {columnLetters.map(c => <ColHead key={c} $on={c === 'C'}>{c}</ColHead>)}
          <ColHead />
          {Array.from({ length: rowCount }, (_, i) => <SheetRow key={i} n={i + 1} />)}
        </SheetGrid>

        <ChartCard>
          <ChartField>Total Revenue</ChartField>
          <ChartPlot />
          <ChartField>OrderDate (Month) <DownTriangle /></ChartField>
        </ChartCard>

        <Watermark>
          <svg width="28" height="32" viewBox="0 0 28 32">
            <path d="M14 0l14 8v16l-14 8L0 24V8z" fill="#c3d2f2" />
            <path d="M14 0l14 8v16l-14-8z" fill="#c9c9c9" />
            <path d="M0 24l14-8 14 8-14 8z" fill="#dfe9f0" />
          </svg>
          <WatermarkText>
            <WatermarkName>exceldemy</WatermarkName>
            <WatermarkTag>EXCEL · DATA · BI</WatermarkTag>
          </WatermarkText>
        </Watermark>
      </Sheet>

      <ScrollRail>
        <ScrollUp />
        <ScrollThumb />
      </ScrollRail>

      <Panel>
        <PanelHeader>
          PivotTable Fields
          <svg width="13" height="8" viewBox="0 0 13 8" fill="none"><path d="M.5 1l6 6 6-6" stroke="#444" /></svg>
        </PanelHeader>
        <PanelTabs>
          <PanelTab $first>Active</PanelTab>
          <PanelTab $on>All</PanelTab>
        </PanelTabs>
        <ChooseRow>
          Choose fields to add to report:
          <GearButton><Settings size={16} strokeWidth={1.4} color="#444" /></GearButton>
        </ChooseRow>
        <SearchBox>Search</SearchBox>
        <FieldList>
          <TreeRoot><SalesTableIcon />Sales</TreeRoot>
          <TreeItem><CheckBox />OrderID</TreeItem>
          <TreeItem><CheckBox />OrderDate</TreeItem>
          <TreeItem><CheckBox />CustomerID</TreeItem>
        </FieldList>
        <DottedRule />
        <DragHint>Drag fields between areas below:</DragHint>
        <Areas>
          <Area>
            <AreaTitle><FilterGlyph />Filters</AreaTitle>
            <AreaBody $h={40} />
          </Area>
          <Area $right>
            <AreaTitle><ColumnsGlyph />Columns</AreaTitle>
            <AreaBody $h={40} />
          </Area>
          <Area $lower>
            <AreaTitle><RowsGlyph />Rows</AreaTitle>
            <AreaBody $h={42}>
              <AreaChip>
                <ChipMark $w={124} />
                OrderDate (Month)
                <Caret />
              </AreaChip>
            </AreaBody>
          </Area>
          <Area $lower $right>
            <AreaTitle><SigmaGlyph />Values</AreaTitle>
            <AreaBody $h={42}>
              <AreaChip $bare>
                <ChipMark $w={94} />
                Total Revenue
              </AreaChip>
            </AreaBody>
          </Area>
        </Areas>
      </Panel>
    </Workspace>
  </Page>
);

export default App;
